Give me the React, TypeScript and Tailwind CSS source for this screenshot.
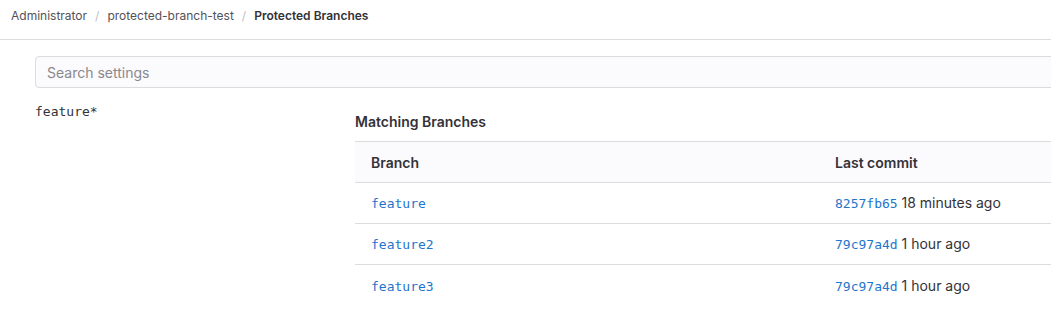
const rows = [
  { branch: "feature", sha: "8257fb65", when: "18 minutes ago" },
  { branch: "feature2", sha: "79c97a4d", when: "1 hour ago" },
  { branch: "feature3", sha: "79c97a4d", when: "1 hour ago" },
];

const mono = "font-['DejaVu_Sans_Mono',monospace]";

export default function App() {
  return (
    <div className="w-[1051px] h-[317px] overflow-hidden bg-white text-[#333238] font-['Inter',sans-serif]">
      {/* breadcrumb bar */}
      <div className="h-[40px] border-b border-[#dcdcde] pl-[11px] pt-[7px] flex items-start text-[12px] leading-[18px]">
        <span className="text-[#535158]">Administrator</span>
        <span className="mx-[8px] text-[#bfbfc3]">/</span>
        <span className="text-[#535158]">protected-branch-test</span>
        <span className="mx-[8px] text-[#bfbfc3]">/</span>
        <span className="font-semibold text-[#333238]">Protected Branches</span>
      </div>

      <div className="w-[1400px] pl-[35px] pt-[16px]">
        <div className="h-[32px] rounded-[4px] border border-[#dcdcde] bg-[#fbfafd] flex items-center px-[11px] text-[14px] text-[#89888d]">
          Search settings
        </div>

        <div className="flex mt-[10px]">
          <div className="w-[320px]">
            <code className={`${mono} text-[13px] leading-[18px] text-[#333238]`}>feature*</code>
          </div>
          <div className="flex-1 pt-[14px]">
            <h4 className="text-[14px] font-semibold leading-[20px] mb-[9px]">Matching Branches</h4>
            <table className="w-[960px] border-collapse text-[14px]">
              <thead>
                <tr className="bg-[#fbfafd] border-y border-[#dcdcde]">
                  <th className="w-[464px] h-[41px] text-left font-semibold px-[16px]">Branch</th>
                  <th className="h-[41px] text-left font-semibold px-[16px]">Last commit</th>
                </tr>
              </thead>
              <tbody>
                {rows.map((r, i) => (
                  <tr key={r.branch} className={i < rows.length - 1 ? "border-b border-[#dcdcde]" : ""}>
                    <td className="h-[41px] px-[16px]">
                      <span className={`${mono} text-[13px] text-[#1f75cb]`}>{r.branch}</span>
                    </td>
                    <td className="h-[41px] px-[16px]">
                      <span className={`${mono} text-[13px] text-[#1f75cb]`}>{r.sha}</span>{" "}
                      <span className="text-[#333238]">{r.when}</span>
                    </td>
                  </tr>
                ))}
              </tbody>
            </table>
          </div>
        </div>
      </div>
    </div>
  );
}
